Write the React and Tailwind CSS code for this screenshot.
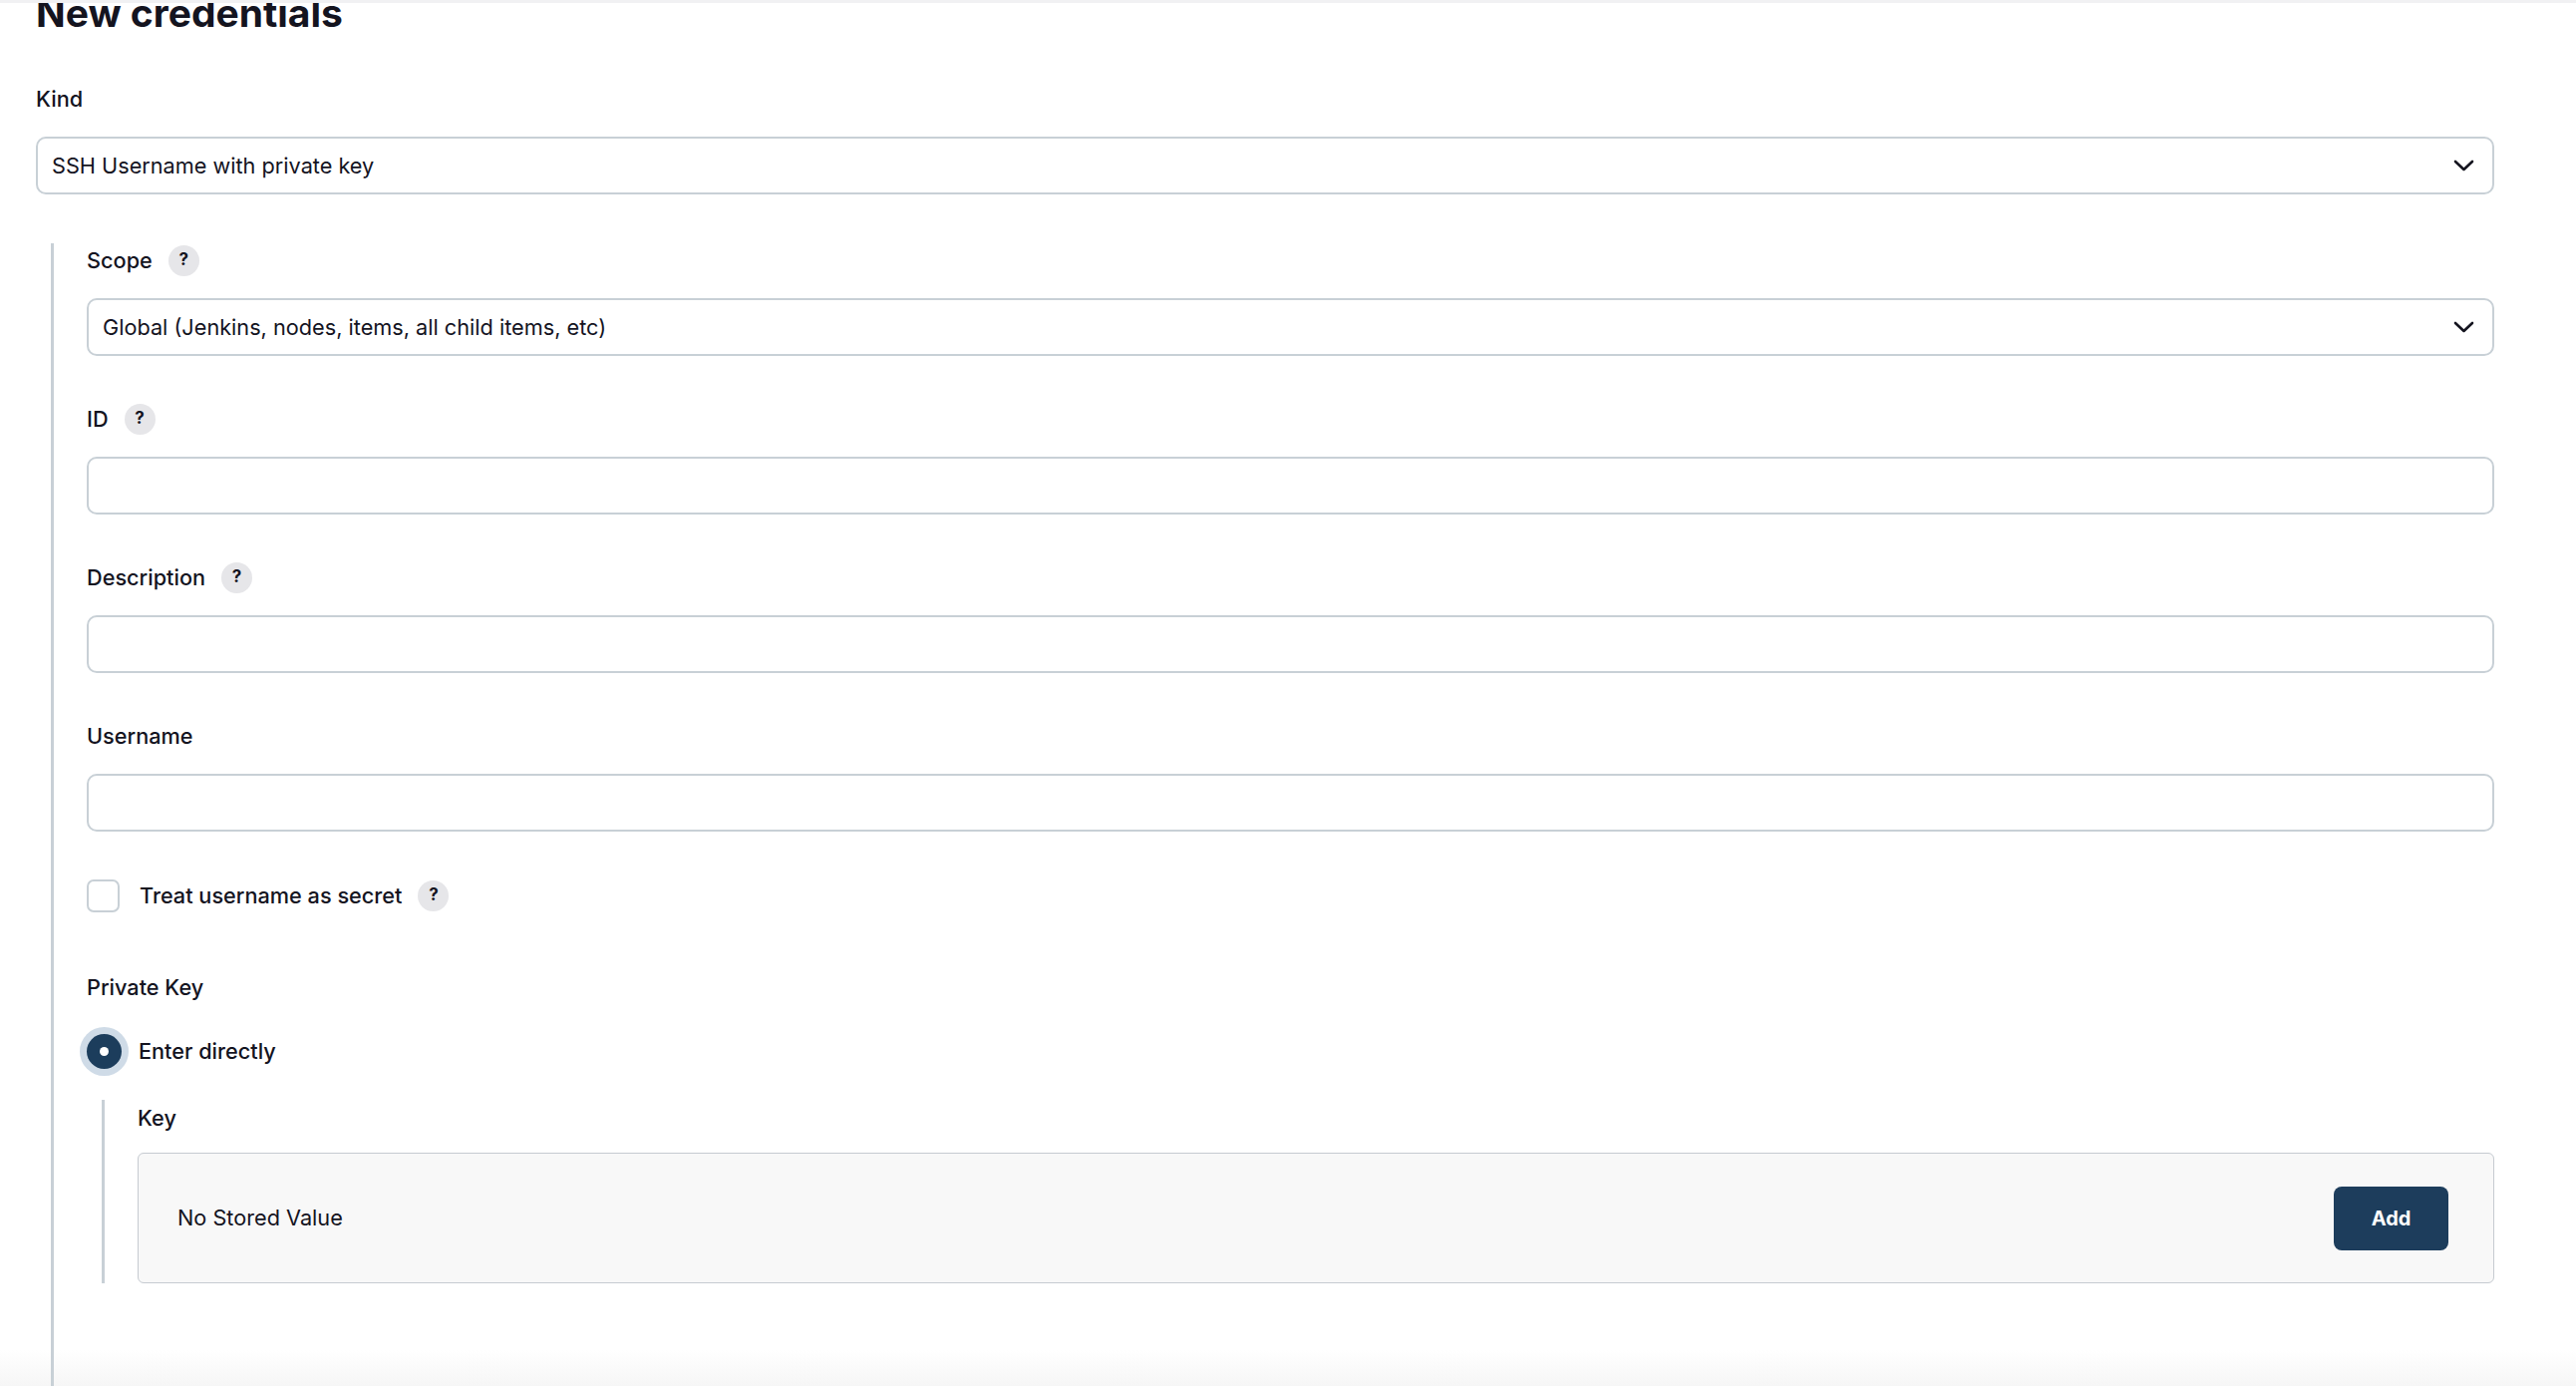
import React from 'react';

const Help = () => (
  <span className="ml-4 w-[31px] h-[31px] rounded-full bg-[#e6e6e9] flex items-center justify-center text-[17px] font-bold text-[#14141f]">
    ?
  </span>
);

const Chevron = () => (
  <svg width="21" height="12" viewBox="0 0 21 12" fill="none">
    <path d="M2 2 L10.5 10 L19 2" stroke="#14141f" strokeWidth="2.6" strokeLinecap="round" strokeLinejoin="round" />
  </svg>
);

const Label = ({ children, help }) => (
  <div className="h-[30px] flex items-center font-medium">
    <span>{children}</span>
    {help && <Help />}
  </div>
);

const Select = ({ value }) => (
  <div className="mt-[23px] h-[58px] border-2 border-[#c8d0d6] rounded-[10px] flex items-center justify-between pl-[14px] pr-[18px]">
    <span>{value}</span>
    <Chevron />
  </div>
);

const Input = () => (
  <div className="mt-[23px] h-[58px] border-2 border-[#c8d0d6] rounded-[10px]" />
);

const Field = ({ label, help, children }) => (
  <div className="mb-[48px]">
    <Label help={help}>{label}</Label>
    {children}
  </div>
);

export default function App() {
  return (
    <div
      className="w-full h-[1390px] overflow-hidden flex flex-col bg-[linear-gradient(to_bottom,#ffffff_calc(100%-36px),#f6f6f6)] text-[#14141f] text-[21.7px]"
      style={{ fontFamily: 'Inter, "Noto Sans", sans-serif' }}
    >
      <div className="h-[3px] bg-[#f1f1f3] shrink-0" />

      <div className="flex-1 flex flex-col pl-[36px] pr-[82px]">
        {/* page is scrolled: top of the heading sits under the header */}
        <div className="h-[30px] overflow-hidden">
          <h1 className="-mt-[10px] text-[39px] leading-[40px] font-bold">New credentials</h1>
        </div>

        <div className="mt-[51px]">
          <Label>Kind</Label>
          <Select value="SSH Username with private key" />
        </div>

        <div className="flex-1 mt-[49px] ml-[15px] border-l-[3px] border-[#c8d0d6] pl-[33px] pt-[2px]">
          <Field label="Scope" help>
            <Select value="Global (Jenkins, nodes, items, all child items, etc)" />
          </Field>
          <Field label="ID" help>
            <Input />
          </Field>
          <Field label="Description" help>
            <Input />
          </Field>
          <div>
            <Label>Username</Label>
            <Input />
          </div>

          <div className="mt-[47px] h-[34px] flex items-center">
            <span className="w-[33px] h-[33px] border-2 border-[#c8d0d6] rounded-[7px]" />
            <span className="ml-[20px] font-medium">Treat username as secret</span>
            <Help />
          </div>

          <div className="mt-[60px]">
            <Label>Private Key</Label>
          </div>

          <div className="mt-[31px] h-[36px] flex items-center">
            <span className="w-[35px] h-[35px] rounded-full bg-[#1c3d5c] ring-[7px] ring-[#cfdbe7] flex items-center justify-center">
              <span className="w-[9px] h-[9px] rounded-full bg-white" />
            </span>
            <span className="ml-[17px] font-medium">Enter directly</span>
          </div>

          <div className="mt-[31px] ml-[15px] border-l-[3px] border-[#c8d0d6] pl-[33px] pt-[3px]">
            <Label>Key</Label>
            <div className="mt-[20px] h-[131px] bg-[#f8f8f8] border-[1.5px] border-[#c6cbd1] rounded-[6px] flex items-center justify-between pl-[39px] pr-[45px]">
              <span>No Stored Value</span>
              <button className="w-[115px] h-[64px] rounded-[8px] bg-[#1d3d5c] text-white font-bold text-[20px]">
                Add
              </button>
            </div>
          </div>
        </div>
      </div>
    </div>
  );
}
